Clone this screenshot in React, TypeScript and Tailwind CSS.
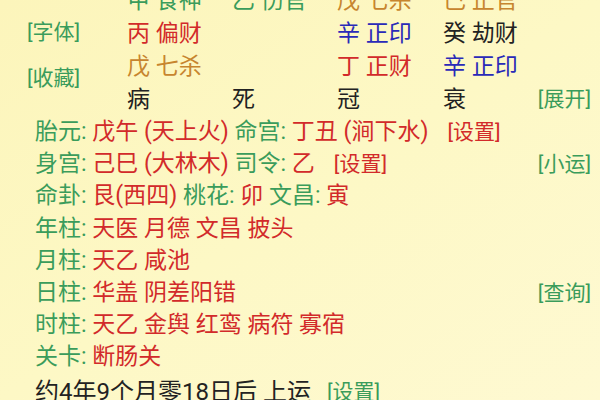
const GREEN = 'text-[#3a9c5b]';
const RED = 'text-[#d22a2a]';
const BLUE = 'text-[#2a2ab8]';
const ORANGE = 'text-[#c7852e]';
const BLACK = 'text-[#222222]';

type Cell = { text: string; color: string };

// pillars grid: 4 rows x 4 columns
const pillarRows: Cell[][] = [
  [
    { text: '甲 食神', color: GREEN },
    { text: '乙 伤官', color: GREEN },
    { text: '戊 七杀', color: ORANGE },
    { text: '己 正官', color: ORANGE },
  ],
  [
    { text: '丙 偏财', color: RED },
    { text: '', color: BLACK },
    { text: '辛 正印', color: BLUE },
    { text: '癸 劫财', color: BLACK },
  ],
  [
    { text: '戊 七杀', color: ORANGE },
    { text: '', color: BLACK },
    { text: '丁 正财', color: RED },
    { text: '辛 正印', color: BLUE },
  ],
  [
    { text: '病', color: BLACK },
    { text: '死', color: BLACK },
    { text: '冠', color: BLACK },
    { text: '衰', color: BLACK },
  ],
];

const COL_WIDTHS = ['w-[105px]', 'w-[105px]', 'w-[106px]', 'w-[94px]'];

type Part = { text: string; kind: 'label' | 'value' | 'link' };

const lines: { parts: Part[]; side?: string }[] = [
  {
    parts: [
      { text: '胎元: ', kind: 'label' },
      { text: '戊午 (天上火) ', kind: 'value' },
      { text: '命宫: ', kind: 'label' },
      { text: '丁丑 (涧下水)', kind: 'value' },
      { text: '[设置]', kind: 'link' },
    ],
  },
  {
    parts: [
      { text: '身宫: ', kind: 'label' },
      { text: '己巳 (大林木) ', kind: 'value' },
      { text: '司令: ', kind: 'label' },
      { text: '乙', kind: 'value' },
      { text: '[设置]', kind: 'link' },
    ],
    side: '[小运]',
  },
  {
    parts: [
      { text: '命卦: ', kind: 'label' },
      { text: '艮(西四) ', kind: 'value' },
      { text: '桃花: ', kind: 'label' },
      { text: '卯 ', kind: 'value' },
      { text: '文昌: ', kind: 'label' },
      { text: '寅', kind: 'value' },
    ],
  },
  { parts: [{ text: '年柱: ', kind: 'label' }, { text: '天医 月德 文昌 披头', kind: 'value' }] },
  { parts: [{ text: '月柱: ', kind: 'label' }, { text: '天乙 咸池', kind: 'value' }] },
  {
    parts: [{ text: '日柱: ', kind: 'label' }, { text: '华盖 阴差阳错', kind: 'value' }],
    side: '[查询]',
  },
  { parts: [{ text: '时柱: ', kind: 'label' }, { text: '天乙 金舆 红鸾 病符 寡宿', kind: 'value' }] },
  { parts: [{ text: '关卡: ', kind: 'label' }, { text: '断肠关', kind: 'value' }] },
];

function partClass(kind: Part['kind']) {
  if (kind === 'label') return GREEN;
  if (kind === 'link') return `${RED} ml-[19px] text-[21px]`;
  return RED;
}

export default function App() {
  return (
    <div className="w-[600px] h-[400px] overflow-hidden bg-gradient-to-br from-[#fcf5bb] via-[#fdf8c5] to-[#fef9d2] font-[Roboto,'Noto_Sans_CJK_SC',sans-serif] whitespace-pre">
      {/* Pillars */}
      <div className="flex -mt-[16px]">
        <div className={`w-[127px] pl-[27px] pt-[34px] flex flex-col gap-[18px] text-[21px] leading-[28px] ${GREEN}`}>
          <span>[字体]</span>
          <span>[收藏]</span>
        </div>
        <div className="flex flex-col text-[23px] leading-[33px]">
          {pillarRows.map((row, i) => (
            <div key={i} className="flex">
              {row.map((cell, j) => (
                <span key={j} className={`${COL_WIDTHS[j]} ${cell.color}`}>
                  {cell.text}
                </span>
              ))}
            </div>
          ))}
        </div>
        <div className="flex-1 flex flex-col justify-end items-end pr-[9px]">
          <span className={`text-[21px] leading-[33px] ${GREEN}`}>[展开]</span>
        </div>
      </div>

      {/* Details */}
      <div className="pl-[35px] pr-[9px] text-[23px] leading-[32.2px]">
        {lines.map((line, i) => (
          <div key={i} className="flex items-center justify-between">
            <div className="flex items-center">
              {line.parts.map((p, j) => (
                <span key={j} className={partClass(p.kind)}>
                  {p.text}
                </span>
              ))}
            </div>
            {line.side && <span className={`text-[21px] ${GREEN}`}>{line.side}</span>}
          </div>
        ))}
        <div className="flex items-center leading-[36px]">
          <span className={`text-[24px] ${BLACK}`}>约4年9个月零18日后 上运</span>
          <span className={`ml-[16px] text-[21px] ${GREEN}`}>[设置]</span>
        </div>
      </div>
    </div>
  );
}
